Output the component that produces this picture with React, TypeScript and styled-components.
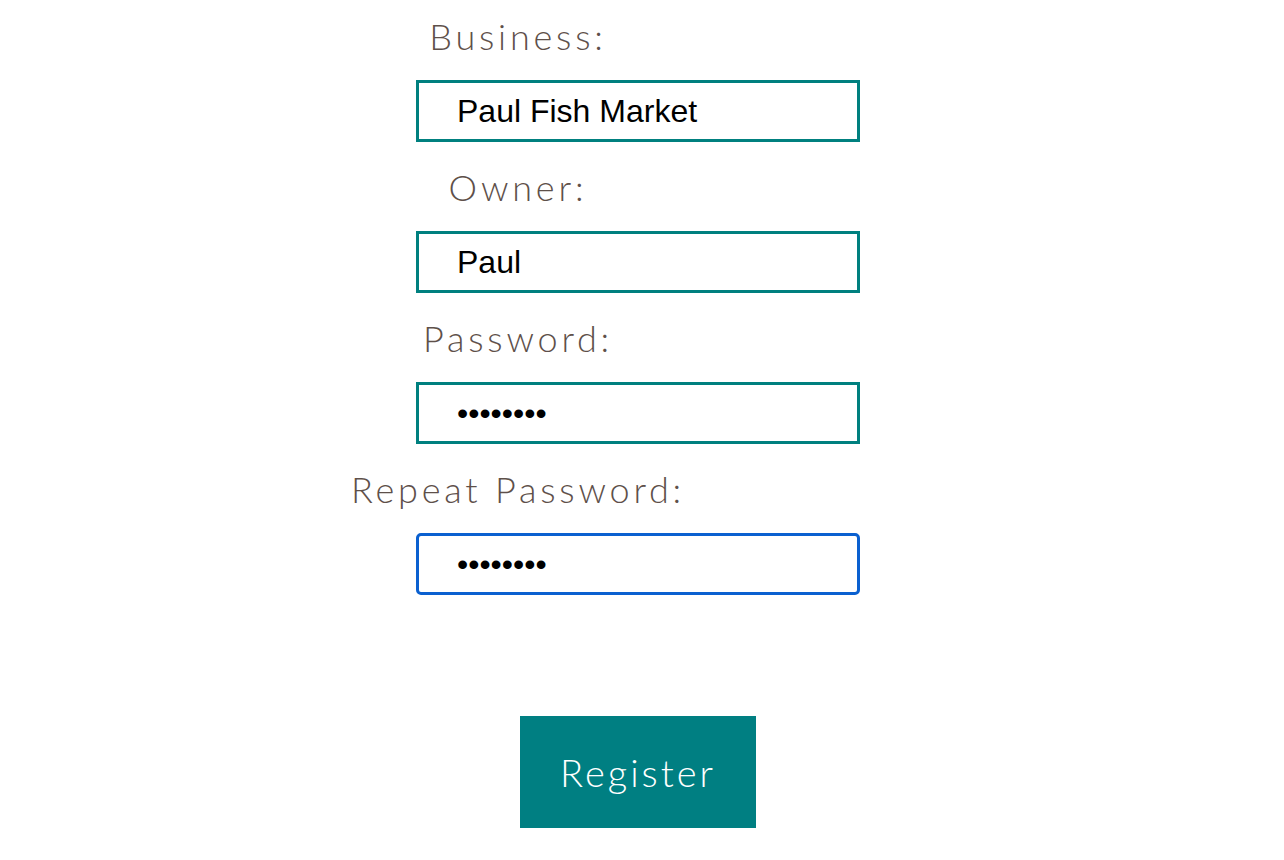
import React from "react";
import styled, { createGlobalStyle } from "styled-components";

const Global = createGlobalStyle`
  html, body { margin: 0; padding: 0; background: #ffffff; }
  body { font-family: "Lato", "Liberation Sans", sans-serif; }
`;

const Page = styled.div`
  display: flex;
  justify-content: center;
  padding-top: 14px;
  padding-right: 8px;
`;

const Form = styled.form`
  display: flex;
  flex-direction: column;
  width: 444px;
`;

const Field = styled.div`
  display: flex;
  flex-direction: column;
  margin-bottom: 23px;
`;

const Label = styled.label`
  display: block;
  width: 684px;
  margin-left: -240px;
  text-align: center;
  font-family: "Lato", "Liberation Sans", sans-serif;
  font-weight: 300;
  font-size: 36px;
  line-height: 44px;
  letter-spacing: 3.8px;
  color: #5e504a;
  margin-bottom: 22px;
`;

const Input = styled.input<{ $focused?: boolean }>`
  box-sizing: border-box;
  width: 444px;
  height: 62px;
  padding: 0 0 0 38px;
  border: 3px solid ${(p) => (p.$focused ? "#0a60d0" : "#00807f")};
  border-radius: ${(p) => (p.$focused ? "5px" : "0")};
  outline: none;
  font-family: "Liberation Sans", Arial, sans-serif;
  font-size: 32px;
  color: #000;
  background: #fff;
`;

const ButtonRow = styled.div`
  display: flex;
  justify-content: center;
  margin-top: 98px;
`;

const Button = styled.button`
  width: 236px;
  height: 112px;
  border: none;
  background: #007f82;
  color: #ffffff;
  font-family: "Lato", "Liberation Sans", sans-serif;
  font-weight: 300;
  font-size: 38px;
  letter-spacing: 3px;
  cursor: pointer;
`;

export default function App() {
  return (
    <>
      <Global />
      <Page>
        <Form onSubmit={(e) => e.preventDefault()}>
          <Field>
            <Label htmlFor="business">Business:</Label>
            <Input id="business" defaultValue="Paul Fish Market" />
          </Field>
          <Field>
            <Label htmlFor="owner">Owner:</Label>
            <Input id="owner" defaultValue="Paul" />
          </Field>
          <Field>
            <Label htmlFor="pw">Password:</Label>
            <Input id="pw" type="password" defaultValue="12345678" />
          </Field>
          <Field>
            <Label htmlFor="pw2">Repeat Password:</Label>
            <Input id="pw2" type="password" defaultValue="12345678" $focused />
          </Field>
          <ButtonRow>
            <Button type="submit">Register</Button>
          </ButtonRow>
        </Form>
      </Page>
    </>
  );
}
